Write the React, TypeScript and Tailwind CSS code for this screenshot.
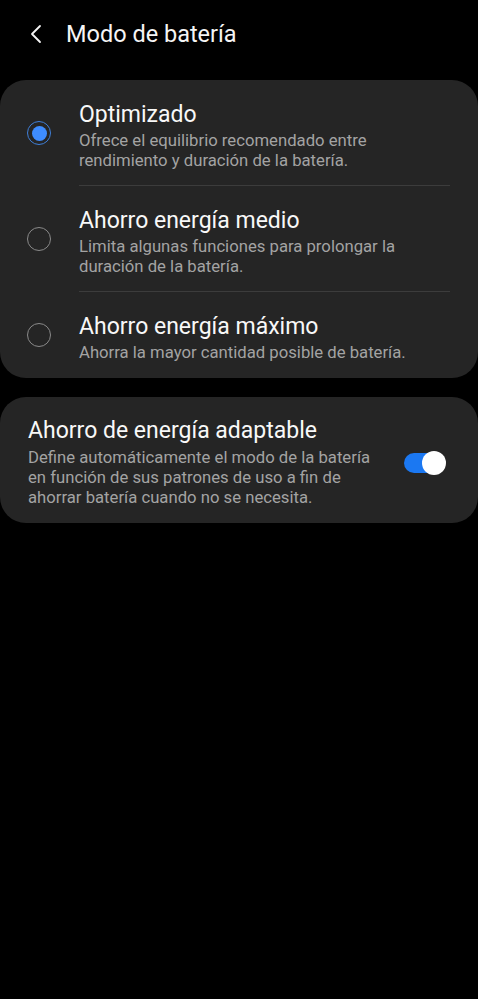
import React from 'react'

interface Mode {
    title: string;
    desc: string;
    selected?: boolean;
}

const modes: Mode[] = [
    { title: 'Optimizado', desc: 'Ofrece el equilibrio recomendado entre rendimiento y duración de la batería.', selected: true },
    { title: 'Ahorro energía medio', desc: 'Limita algunas funciones para prolongar la duración de la batería.' },
    { title: 'Ahorro energía máximo', desc: 'Ahorra la mayor cantidad posible de batería.' },
]

const Radio = ({ selected }: { selected?: boolean }) => (
    selected ? (
        <div className='size-[24px] shrink-0 rounded-full border-[1.5px] border-[#3f7fd8] flex items-center justify-center'>
            <div className='size-[15px] rounded-full bg-[#3e8cff]' />
        </div>
    ) : (
        <div className='size-[24px] shrink-0 rounded-full border-[1.5px] border-[#8a8a8a]' />
    )
)

export default function App() {
    return (
        <div className='w-[478px] h-[999px] bg-black text-white' style={{ fontFamily: 'Roboto, sans-serif' }}>
            {/* header */}
            <div className='h-[68px] flex items-center pl-[28px]'>
                <svg width='18' height='20' viewBox='0 0 18 20' className='mr-[20px]'>
                    <path d='M12 2 L4 10 L12 18' fill='none' stroke='#f5f5f5' strokeWidth='1.8' strokeLinecap='round' strokeLinejoin='round' />
                </svg>
                <div className='text-[23.5px] leading-[30px] text-[#f5f5f5]'>Modo de batería</div>
            </div>

            <div className='mt-[12px] bg-[#252525] rounded-[26px]'>
                {modes.map((m, i) => (
                    <div key={m.title} className='flex items-center pl-[27px]'>
                        <Radio selected={m.selected} />
                        <div className={`ml-[28px] flex-1 mr-[28px] pt-[21px] ${i === modes.length - 1 ? 'pb-[15px]' : 'pb-[14px] border-b border-[#3c3c3c]'}`}>
                            <div className='text-[23px] leading-[28px] text-[#f8f8f8]'>{m.title}</div>
                            <div className='mt-[2px] max-w-[345px] text-[16.7px] leading-[20px] text-[#a3a3a3]'>{m.desc}</div>
                        </div>
                    </div>
                ))}
            </div>

            <div className='mt-[19px] bg-[#252525] rounded-[26px] flex items-center pl-[28px] pr-[32px] pt-[20px] pb-[15px]'>
                <div className='flex-1'>
                    <div className='text-[23px] leading-[28px] text-[#f8f8f8]'>Ahorro de energía adaptable</div>
                    <div className='mt-[3px] max-w-[355px] text-[16.7px] leading-[20px] text-[#a3a3a3]'>
                        Define automáticamente el modo de la batería en función de sus patrones de uso a fin de ahorrar batería cuando no se necesita.
                    </div>
                </div>
                <div className='relative w-[42px] h-[24px] shrink-0'>
                    <div className='absolute left-0 top-[2px] w-[40px] h-[20px] rounded-full bg-[#1b78f2]' />
                    <div className='absolute right-0 top-0 size-[24px] rounded-full bg-white' />
                </div>
            </div>
        </div>
    )
}
